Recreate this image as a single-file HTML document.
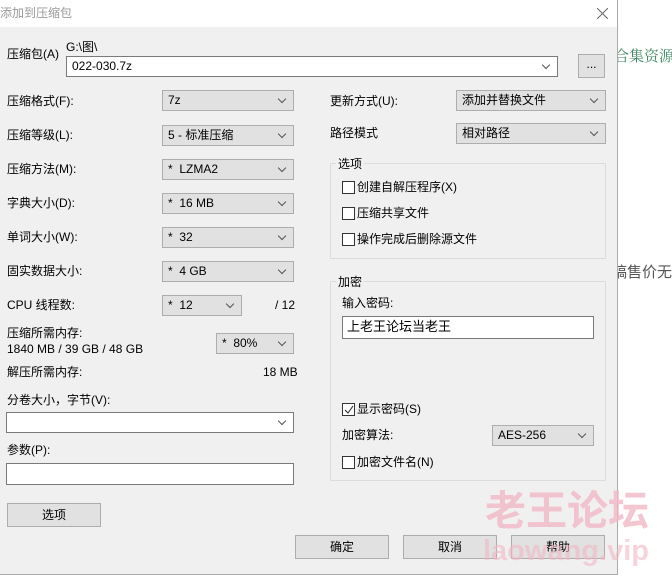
<!DOCTYPE html>
<html><head><meta charset="utf-8"><style>
*{box-sizing:border-box;margin:0;padding:0}
body{width:672px;height:577px;background:#fff;position:relative;overflow:hidden;font-family:"Liberation Sans","Noto Sans CJK SC",sans-serif;font-size:12px;color:#000}
.a{position:absolute;white-space:nowrap;line-height:14px}
#dlg{position:absolute;left:0;top:0;width:618px;height:575px;background:#f0f0f0;border-right:1px solid #aaa;border-bottom:1px solid #aaa}
#tb{position:absolute;left:0;top:0;width:617px;height:27px;background:#fff}
.cb{position:absolute;height:21px;background:#e1e1e1;border:1px solid #adadad;padding-left:5px;line-height:19px;font-size:12px}
.cb.w{background:#fff;border-color:#7a7a7a}
.cb:after{content:"";position:absolute;right:8px;top:5px;width:5px;height:5px;border-right:1px solid #555;border-bottom:1px solid #555;transform:rotate(45deg)}
.in{position:absolute;background:#fff;border:1px solid #7a7a7a;padding-left:4px;line-height:20px}
.bt{position:absolute;height:24px;background:#e1e1e1;border:1px solid #adadad;text-align:center;line-height:22px}
.gb{position:absolute;border:1px solid #dcdcdc}
.gl{position:absolute;background:#f0f0f0;padding:0 2px;line-height:14px}
.ck{position:absolute;width:13px;height:13px;border:1px solid #333;background:#fff}
.wm{position:absolute;color:#f2b8c6;font-weight:bold;white-space:nowrap}
</style></head><body>
<div class="a" style="left:614px;top:49px;color:#3d8a63;font-size:15px;font-family:'Noto Serif CJK SC',serif">合集资源</div>
<div class="a" style="left:612px;top:266px;color:#555;font-size:15px">稿售价无</div>
<div id="dlg">
<div id="tb"><div class="a" style="left:0;top:6px;color:#999">添加到压缩包</div>
<svg style="position:absolute;left:597px;top:8px" width="11" height="11"><path d="M0 0L11 11M11 0L0 11" stroke="#666" stroke-width="1"/></svg></div>

<div class="a" style="left:7px;top:47px">压缩包(A)</div>
<div class="a" style="left:66px;top:40px">G:\图\</div>
<div class="cb w" style="left:66px;top:56px;width:492px">022-030.7z</div>
<div class="bt" style="left:578px;top:54px;width:27px;height:24px;line-height:18px">...</div>

<div class="a" style="left:7px;top:94px">压缩格式(F):</div><div class="cb" style="left:162px;top:90px;width:132px">7z</div>
<div class="a" style="left:7px;top:128px">压缩等级(L):</div><div class="cb" style="left:162px;top:125px;width:132px">5 - 标准压缩</div>
<div class="a" style="left:7px;top:162px">压缩方法(M):</div><div class="cb" style="left:162px;top:159px;width:132px">* &nbsp;LZMA2</div>
<div class="a" style="left:7px;top:196px">字典大小(D):</div><div class="cb" style="left:162px;top:193px;width:132px">* &nbsp;16 MB</div>
<div class="a" style="left:7px;top:230px">单词大小(W):</div><div class="cb" style="left:162px;top:227px;width:132px">* &nbsp;32</div>
<div class="a" style="left:7px;top:264px">固实数据大小:</div><div class="cb" style="left:162px;top:261px;width:132px">* &nbsp;4 GB</div>
<div class="a" style="left:7px;top:298px">CPU 线程数:</div><div class="cb" style="left:162px;top:295px;width:80px">* &nbsp;12</div>
<div class="a" style="left:275px;top:298px">/ 12</div>
<div class="a" style="left:7px;top:326px">压缩所需内存:</div>
<div class="a" style="left:7px;top:342px">1840 MB / 39 GB / 48 GB</div>
<div class="cb" style="left:216px;top:333px;width:78px">* &nbsp;80%</div>
<div class="a" style="left:7px;top:365px">解压所需内存:</div>
<div class="a" style="left:263px;top:365px">18 MB</div>
<div class="a" style="left:7px;top:393px">分卷大小，字节(V):</div>
<div class="cb w" style="left:6px;top:412px;width:288px"></div>
<div class="a" style="left:7px;top:443px">参数(P):</div>
<div class="in" style="left:6px;top:463px;width:288px;height:22px"></div>
<div class="bt" style="left:7px;top:503px;width:94px">选项</div>

<div class="a" style="left:330px;top:94px">更新方式(U):</div><div class="cb" style="left:456px;top:90px;width:150px">添加并替换文件</div>
<div class="a" style="left:330px;top:126px">路径模式</div><div class="cb" style="left:456px;top:123px;width:150px">相对路径</div>

<div class="gb" style="left:330px;top:163px;width:276px;height:96px"></div>
<div class="gl" style="left:336px;top:157px">选项</div>
<div class="ck" style="left:342px;top:181px"></div><div class="a" style="left:357px;top:180px">创建自解压程序(X)</div>
<div class="ck" style="left:342px;top:207px"></div><div class="a" style="left:357px;top:206px">压缩共享文件</div>
<div class="ck" style="left:342px;top:233px"></div><div class="a" style="left:357px;top:232px">操作完成后删除源文件</div>

<div class="gb" style="left:330px;top:281px;width:276px;height:200px"></div>
<div class="gl" style="left:336px;top:275px">加密</div>
<div class="a" style="left:342px;top:296px">输入密码:</div>
<div class="in" style="left:342px;top:316px;width:252px;height:23px;font-size:13px">上老王论坛当老王</div>
<div class="ck" style="left:342px;top:403px"></div>
<svg style="position:absolute;left:344px;top:405px" width="10" height="10"><path d="M1 5L4 8L9 1" stroke="#222" fill="none" stroke-width="1"/></svg>
<div class="a" style="left:357px;top:402px">显示密码(S)</div>
<div class="a" style="left:342px;top:428px">加密算法:</div>
<div class="cb" style="left:492px;top:425px;width:102px">AES-256</div>
<div class="ck" style="left:342px;top:456px"></div><div class="a" style="left:357px;top:455px">加密文件名(N)</div>

<div class="bt" style="left:295px;top:535px;width:94px">确定</div>
<div class="bt" style="left:403px;top:535px;width:94px">取消</div>
<div class="bt" style="left:511px;top:535px;width:94px">帮助</div>
</div>
<div class="wm" style="left:485px;top:488px;font-size:41px;line-height:46px;opacity:.8">老王论坛</div>
<div class="wm" style="left:483px;top:533px;font-size:29px;line-height:36px;opacity:.6">laowang.vip</div>
</body></html>
